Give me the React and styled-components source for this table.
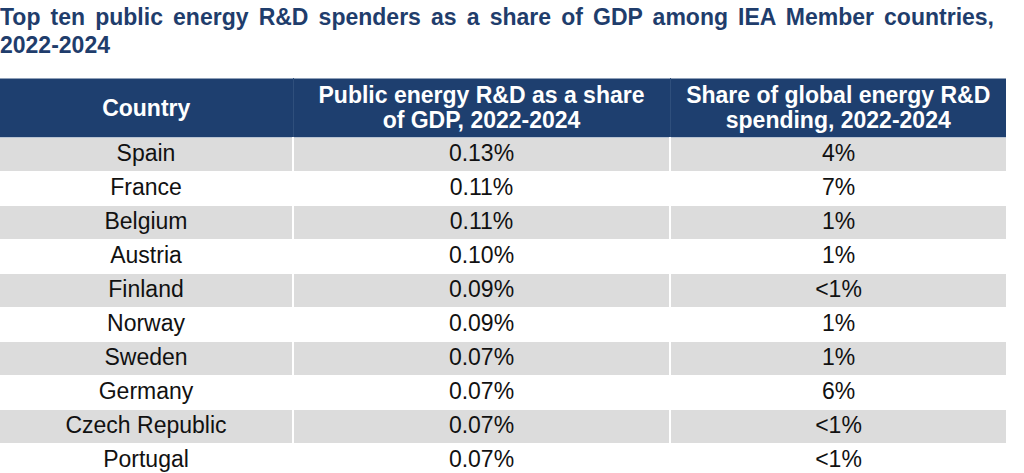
import React from 'react';
import styled, { createGlobalStyle } from 'styled-components';

const GlobalStyle = createGlobalStyle`
  body {
    margin: 0;
    background: #fff;
    font-family: "Liberation Sans", Arial, sans-serif;
  }
`;

const Page = styled.div`
  width: 1024px;
  height: 473px;
  overflow: hidden;
`;

const Title = styled.h2`
  margin: 0;
  padding-top: 3px;
  width: 994px;
  font-size: 23px;
  line-height: 28px;
  font-weight: 700;
  color: #1f3d6c;
  text-align: justify;
`;

const NoWrap = styled.span`
  white-space: nowrap;
`;

const Table = styled.table`
  margin-top: 19px;
  width: 1006px;
  border-collapse: collapse;
  table-layout: fixed;
`;

const HeaderRow = styled.tr`
  background-color: #1e3f6f;
  border-top: 1px solid #8fa0b8;
  border-bottom: 1px solid #b9c3d2;
`;

const HeaderCell = styled.th`
  height: 58px;
  padding: 0 6px;
  text-align: center;
  vertical-align: middle;
  color: #fff;
  font-size: 23px;
  line-height: 25px;
  font-weight: 700;
  border-left: 1px solid #2f4f7c;
  &:first-child {
    border-left: none;
  }
`;

const Row = styled.tr`
  background-color: ${(p) => (p.$shaded ? '#dcdcdc' : '#fff')};
  border-top: 1px solid #fff;
`;

const Cell = styled.td`
  height: 30px;
  padding: 0 0 3px;
  text-align: center;
  vertical-align: middle;
  font-size: 23px;
  line-height: 26px;
  color: #111;
  border-left: 2px solid #fff;
  &:first-child {
    border-left: none;
  }
`;

const rows = [
  ['Spain', '0.13%', '4%'],
  ['France', '0.11%', '7%'],
  ['Belgium', '0.11%', '1%'],
  ['Austria', '0.10%', '1%'],
  ['Finland', '0.09%', '<1%'],
  ['Norway', '0.09%', '1%'],
  ['Sweden', '0.07%', '1%'],
  ['Germany', '0.07%', '6%'],
  ['Czech Republic', '0.07%', '<1%'],
  ['Portugal', '0.07%', '<1%'],
];

export default function App() {
  return (
    <Page>
      <GlobalStyle />
      <Title>
        Top ten public energy R&amp;D spenders as a share of GDP among IEA Member countries,{' '}
        <NoWrap>2022-2024</NoWrap>
      </Title>
      <Table>
        <colgroup>
          <col style={{ width: 293 }} />
          <col style={{ width: 377 }} />
          <col style={{ width: 336 }} />
        </colgroup>
        <thead>
          <HeaderRow>
            <HeaderCell>Country</HeaderCell>
            <HeaderCell>
              Public energy R&amp;D as a share
              <br />
              of GDP, 2022-2024
            </HeaderCell>
            <HeaderCell>
              Share of global energy R&amp;D
              <br />
              spending, 2022-2024
            </HeaderCell>
          </HeaderRow>
        </thead>
        <tbody>
          {rows.map((r, i) => (
            <Row key={r[0]} $shaded={i % 2 === 0}>
              <Cell>{r[0]}</Cell>
              <Cell>{r[1]}</Cell>
              <Cell>{r[2]}</Cell>
            </Row>
          ))}
        </tbody>
      </Table>
    </Page>
  );
}
